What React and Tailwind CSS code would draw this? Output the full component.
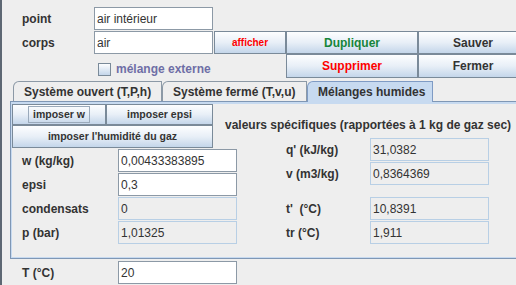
import React from 'react'

const Field = ({ value, editable = true, className = '' }) => (
  <div
    className={`flex-none w-[119px] h-[23px] flex items-center pl-[2px] border text-[12px] text-[#333333] ${
      editable ? 'bg-white border-[#8c99a6]' : 'bg-[#eeeeee] border-[#b8cfe5]'
    } ${className}`}
  >
    {value}
  </div>
)

const Button = ({ children, className = '' }) => (
  <div
    className={`flex-none flex items-center justify-center font-bold border border-[#7a8a99] bg-gradient-to-b from-[#fdfeff] via-[#e8eff7] to-[#c4d6ea] ${className}`}
  >
    {children}
  </div>
)

const Tab = ({ label, selected, className = '' }) => (
  <div
    className={`flex-none flex items-center pl-[10px] font-bold text-[12px] text-[#333333] border-t border-l border-r rounded-tl-[6px] ${
      selected
        ? 'relative z-10 h-[21px] -mb-px bg-[#c7daf0] border-[#7f9bc4]'
        : 'h-[20px] bg-[#eeeeee] border-[#8c99a6]'
    } ${className}`}
  >
    {label}
  </div>
)

export default function App() {
  return (
    <div className="w-[516px] h-[285px] overflow-hidden bg-[#eeeeee] border-l-2 border-[#5d6773] text-[12px] text-[#333333] font-['Liberation_Sans',Arial,sans-serif]">
      {/* header rows */}
      <div className="pt-[7px]">
        <div className="flex h-[23px] items-center">
          <span className="flex-none w-[72px] ml-[20px] font-bold">point</span>
          <Field value="air intérieur" />
        </div>
        <div className="flex h-[23px] mt-[1px] items-center">
          <span className="flex-none w-[72px] ml-[20px] font-bold">corps</span>
          <Field value="air" />
          <Button className="ml-[1px] w-[72px] h-[23px] text-[10px] text-[#ff0000]">afficher</Button>
          <Button className="w-[132px] h-[23px] text-[12px] text-[#17853a]">Dupliquer</Button>
          <Button className="w-[110px] h-[23px] text-[12px] text-[#333333]">Sauver</Button>
        </div>
        <div className="flex h-[24px]">
          <div className="flex-none w-[284px] flex items-center pl-[96px] pt-[6px]">
            <span className="flex-none w-[13px] h-[13px] border border-[#7a8a99] bg-gradient-to-b from-[#fdfeff] to-[#c4d6ea]" />
            <span className="ml-[5px] font-bold text-[#6e6ea6]">mélange externe</span>
          </div>
          <Button className="w-[132px] h-[24px] text-[12px] text-[#ff0000]">Supprimer</Button>
          <Button className="w-[110px] h-[24px] text-[12px] text-[#333333]">Fermer</Button>
        </div>
      </div>

      {/* tabs */}
      <div className="flex items-end mt-[3px] pl-[11px]">
        <Tab label="Système ouvert (T,P,h)" className="w-[149px]" />
        <Tab label="Système fermé (T,v,u)" className="w-[145px]" />
        <Tab label="Mélanges humides" selected className="w-[126px]" />
      </div>

      {/* tab panel */}
      <div className="ml-[8px] w-[520px] h-[158px] border border-[#7f97b5] shadow-[inset_1px_0_0_#c7daf0,inset_0_-1px_0_#c7daf0]">
        <div className="h-[2px] bg-[#c7daf0]" />
        <div className="flex pl-[1px]">
          {/* left column */}
          <div className="flex-none w-[225px]">
            <div className="flex">
              <Button className="w-[94px] h-[21px] text-[10.5px] text-[#333333]">
                <span className="border border-[#9aaabb] px-[4px] leading-[15px]">imposer w</span>
              </Button>
              <Button className="w-[107px] h-[21px] text-[10.5px] text-[#333333]">imposer epsi</Button>
            </div>
            <Button className="w-[201px] h-[23px] text-[10.5px] text-[#333333]">imposer l'humidité du gaz</Button>
            <div className="flex items-center mt-[1px]">
              <span className="flex-none w-[96px] ml-[10px] font-bold">w (kg/kg)</span>
              <Field value="0,00433383895" />
            </div>
            <div className="flex items-center mt-[1px]">
              <span className="flex-none w-[96px] ml-[10px] font-bold">epsi</span>
              <Field value="0,3" />
            </div>
            <div className="flex items-center mt-[1px]">
              <span className="flex-none w-[96px] ml-[10px] font-bold">condensats</span>
              <Field value="0" editable={false} />
            </div>
            <div className="flex items-center mt-[1px]">
              <span className="flex-none w-[96px] ml-[10px] font-bold">p (bar)</span>
              <Field value="1,01325" editable={false} />
            </div>
          </div>

          {/* right column */}
          <div className="flex-none -ml-[12px]">
            <div className="mt-[14px] h-[14px] leading-[14px] font-bold whitespace-nowrap">
              valeurs spécifiques (rapportées à 1 kg de gaz sec)
            </div>
            <div className="flex items-center mt-[6px]">
              <span className="flex-none w-[84px] ml-[61px] font-bold">q' (kJ/kg)</span>
              <Field value="31,0382" editable={false} />
            </div>
            <div className="flex items-center mt-[1px]">
              <span className="flex-none w-[84px] ml-[61px] font-bold">v (m3/kg)</span>
              <Field value="0,8364369" editable={false} />
            </div>
            <div className="flex items-center mt-[12px]">
              <span className="flex-none w-[84px] ml-[61px] font-bold whitespace-pre">t'  (°C)</span>
              <Field value="10,8391" editable={false} />
            </div>
            <div className="flex items-center mt-[1px]">
              <span className="flex-none w-[84px] ml-[61px] font-bold">tr (°C)</span>
              <Field value="1,911" editable={false} />
            </div>
          </div>
        </div>
      </div>

      {/* below panel */}
      <div className="flex items-center mt-[2px]">
        <span className="flex-none w-[96px] ml-[20px] font-bold">T (°C)</span>
        <Field value="20" />
      </div>
    </div>
  )
}
